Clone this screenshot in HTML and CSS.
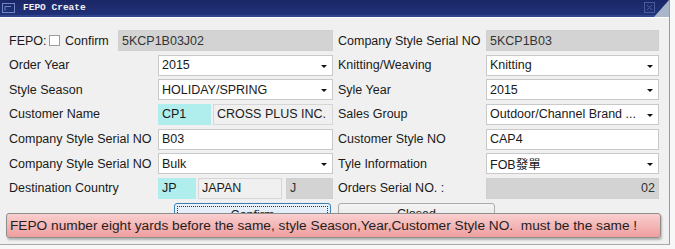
FILE: index.html
```html
<!DOCTYPE html>
<html lang="en">
<head>
  <meta charset="UTF-8" />
  <title>FEPO Create</title>
  <link rel="stylesheet" href="styles.css">
</head>
<body>
  <div class="window">
    <div class="titlebar">
      <svg class="app-icon" width="16" height="14" viewBox="0 0 16 14">
        <rect x="1.5" y="2.5" width="12" height="9" fill="none" stroke="#6f86c4" />
        <path d="M4 5.5h6M4 5.5v4" stroke="#6f86c4" fill="none" />
      </svg>
      <span class="title">FEPO Create</span>
      <svg class="close" width="11" height="11" viewBox="0 0 11 11">
        <rect x="0.5" y="0.5" width="10" height="10" fill="none" stroke="#4a5d9a" />
        <path d="M3 3l5 5M8 3l-5 5" stroke="#4a5d9a" />
      </svg>
      <span class="corner"></span>
    </div>

    <div class="body">
      <div class="form">
        <div class="fepo">
          <label class="fepo-label">FEPO:</label>
          <span class="check"></span>
          <label>Confirm</label>
          <div class="field disabled fepo-no">5KCP1B03J02</div>
        </div>
        <label>Company Style Serial NO</label>
        <div class="field disabled">5KCP1B03</div>

        <label>Order Year</label>
        <div class="field select">2015</div>
        <label>Knitting/Weaving</label>
        <div class="field select">Knitting</div>

        <label>Style Season</label>
        <div class="field select">HOLIDAY/SPRING</div>
        <label>Syle Year</label>
        <div class="field select">2015</div>

        <label>Customer Name</label>
        <div class="pair">
          <div class="field code cp">CP1</div>
          <div class="field readonly grow">CROSS PLUS INC.</div>
        </div>
        <label>Sales Group</label>
        <div class="field select">Outdoor/Channel Brand ...</div>

        <label>Company Style Serial NO</label>
        <div class="field">B03</div>
        <label>Customer Style NO</label>
        <div class="field">CAP4</div>

        <label>Company Style Serial NO</label>
        <div class="field select">Bulk</div>
        <label>Tyle Information</label>
        <div class="field select">FOB發單</div>

        <label>Destination Country</label>
        <div class="pair">
          <div class="field code jp">JP</div>
          <div class="field readonly country">JAPAN</div>
          <div class="field disabled grow">J</div>
        </div>
        <label>Orders Serial NO. :</label>
        <div class="field disabled num">02</div>
      </div>

      <div class="actions">
        <button class="btn focused"><span>Confirm</span></button>
        <button class="btn"><span>Closed</span></button>
      </div>

      <div class="tooltip">FEPO number eight yards before the same, style Season,Year,Customer Style NO.  must be the same !</div>
    </div>
  </div>
</body>
</html>
```

FILE: styles.css
```css
body {
  margin: 0;
  background: #f7f7f7;
  font-family: "Liberation Sans", Arial, "Noto Sans CJK TC", sans-serif;
  font-size: 12.5px;
  color: #1a1a1a;
}
.window {
  width: 669px;
  height: 244px;
  background: #f0f0f0;
  border-right: 1px solid #9a9a9a;
  border-bottom: 1px solid #a8a8a8;
  position: relative;
}
.titlebar {
  height: 15px;
  display: flex;
  align-items: center;
  background: linear-gradient(#1a2766, #223178);
  border-bottom: 2px solid #2f468e;
  position: relative;
}
.app-icon {
  margin-left: 1px;
  margin-right: 6px;
}
.title {
  font-family: "Liberation Mono", monospace;
  font-weight: bold;
  font-size: 9.5px;
  color: #f2f2f2;
  flex: 1;
}
.close {
  margin-right: 14px;
}
.corner {
  position: absolute;
  right: 0;
  bottom: -2px;
  width: 0;
  height: 0;
  border-left: 15px solid transparent;
  border-bottom: 17px solid #a9b6c9;
}
.body {
  border-top: 1px solid #ffffff;
  position: relative;
}
.form {
  display: grid;
  grid-template-columns: 144px 175px 143px 173px;
  column-gap: 5px;
  grid-auto-rows: 21px;
  row-gap: 3.67px;
  padding: 12px 0 0 9px;
}
.form > label {
  display: flex;
  align-items: center;
  white-space: nowrap;
}
.fepo {
  grid-column: 1 / 3;
  display: flex;
  align-items: center;
}
.fepo label {
  white-space: nowrap;
}
.fepo-label {
  width: 40px;
}
.check {
  width: 11px;
  height: 11px;
  background: #fff;
  border: 1px solid #9c9c9c;
  box-sizing: border-box;
  margin-right: 5px;
}
.fepo-no {
  width: 215px;
  margin-left: auto;
}
.field {
  box-sizing: border-box;
  height: 21px;
  background: #fff;
  border: 1px solid #c9c9c9;
  padding: 0 3px;
  display: flex;
  align-items: center;
  white-space: nowrap;
  overflow: hidden;
  position: relative;
}
.grow {
  flex: 1;
}
.select::after {
  content: "";
  position: absolute;
  right: 5px;
  top: 9px;
  border-left: 3px solid transparent;
  border-right: 3px solid transparent;
  border-top: 3px solid #111;
}
.disabled {
  background: #d3d3d3;
  border-color: #d0d0d0;
  color: #333;
}
.readonly {
  background: #f0f0f0;
  border-color: #d6d6d6;
}
.code {
  background: #b0eeee;
  border-color: #b0eeee;
}
.pair {
  display: flex;
  gap: 2px;
}
.cp {
  width: 53px;
}
.jp {
  width: 38px;
}
.country {
  width: 84px;
  margin-right: 2px;
}
.num {
  justify-content: flex-end;
}
.actions {
  display: flex;
  gap: 7px;
  padding: 4px 0 0 174px;
}
.btn {
  width: 157px;
  height: 23px;
  font: inherit;
  color: #1a1a1a;
  background: linear-gradient(#f4f4f4, #e2e2e2);
  border: 1px solid #acacac;
  border-radius: 3px;
  padding: 2px;
}
.btn span {
  display: block;
  height: 100%;
  line-height: 17px;
}
.focused {
  border-color: #3c7fb1;
  background: linear-gradient(#eaf3fb, #d8e8f6);
}
.focused span {
  border: 1px dotted #333;
}
.tooltip {
  position: absolute;
  left: 6px;
  top: 195px;
  width: 655px;
  height: 25px;
  box-sizing: border-box;
  padding: 0 0 0 3px;
  display: flex;
  align-items: center;
  white-space: pre;
  font-size: 13.7px;
  color: #1f1f1f;
  background: linear-gradient(#f9cfcf, #ef9e9e);
  border: 1px solid #8e8e8e;
  border-radius: 3px;
  box-shadow: 1px 2px 2px rgba(0, 0, 0, 0.25);
}
```
